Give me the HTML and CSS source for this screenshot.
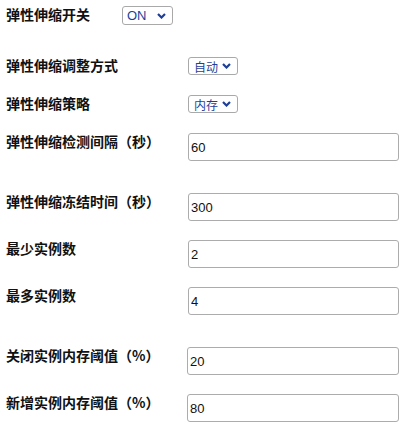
FILE: index.html
```html
<!DOCTYPE html>
<html lang="zh-CN">
<head>
<meta charset="utf-8">
<title>弹性伸缩设置</title>
<link rel="stylesheet" href="styles.css">
</head>
<body>
<form class="form">
  <div class="row row-switch">
    <label class="label label-short">弹性伸缩开关</label>
    <div class="select select-on"><span>ON</span><svg class="chev" width="9" height="6" viewBox="0 0 9 6"><path d="M1 1 L4.5 4.5 L8 1" fill="none" stroke="#1d3f99" stroke-width="2.2"/></svg></div>
  </div>
  <div class="row row-sel group">
    <label class="label">弹性伸缩调整方式</label>
    <div class="select select-cn"><span>自动</span><svg class="chev" width="9" height="6" viewBox="0 0 9 6"><path d="M1 1 L4.5 4.5 L8 1" fill="none" stroke="#1d3f99" stroke-width="2.2"/></svg></div>
  </div>
  <div class="row row-sel">
    <label class="label">弹性伸缩策略</label>
    <div class="select select-cn"><span>内存</span><svg class="chev" width="9" height="6" viewBox="0 0 9 6"><path d="M1 1 L4.5 4.5 L8 1" fill="none" stroke="#1d3f99" stroke-width="2.2"/></svg></div>
  </div>
  <div class="row">
    <label class="label">弹性伸缩检测间隔（秒）</label>
    <input class="input" type="text" value="60">
  </div>
  <div class="row group">
    <label class="label">弹性伸缩冻结时间（秒）</label>
    <input class="input" type="text" value="300">
  </div>
  <div class="row">
    <label class="label">最少实例数</label>
    <input class="input" type="text" value="2">
  </div>
  <div class="row">
    <label class="label">最多实例数</label>
    <input class="input" type="text" value="4">
  </div>
  <div class="row group">
    <label class="label">关闭实例内存阈值（%）</label>
    <input class="input input-wide" type="text" value="20">
  </div>
  <div class="row">
    <label class="label">新增实例内存阈值（%）</label>
    <input class="input input-wide" type="text" value="80">
  </div>
</form>
</body>
</html>
```

FILE: styles.css
```css
html, body {
  margin: 0;
  padding: 0;
  background: #ffffff;
}

.form {
  display: flex;
  flex-direction: column;
  gap: 19px;
  padding: 6px 0 0 6px;
  margin: 0;
}

.row {
  display: flex;
  align-items: flex-start;
}

.row.group {
  margin-top: 13px;
}

.row-sel {
  min-height: 19px;
}

.label {
  width: 182px;
  flex: none;
  font-family: "Noto Sans CJK SC", "Noto Sans", sans-serif;
  font-weight: 700;
  font-size: 14px;
  line-height: 16px;
  color: #111111;
  text-spacing-trim: space-all;
  white-space: nowrap;
}

.label-short {
  width: 116px;
}

.select {
  box-sizing: border-box;
  display: flex;
  align-items: center;
  justify-content: space-between;
  height: 18px;
  border: 1px solid #a9a9a9;
  border-radius: 3px;
  background: #ffffff;
  color: #1d3f99;
  padding: 0 6px 0 5px;
}

.select-on {
  width: 51px;
  height: 19px;
  font-family: "Liberation Sans", Arial, sans-serif;
  font-size: 13px;
  padding-left: 4px;
}

.select-cn {
  width: 50px;
  font-family: "Noto Sans CJK SC", sans-serif;
  font-size: 12px;
}

.chev {
  display: block;
  flex: none;
}

.input {
  box-sizing: border-box;
  width: 211px;
  height: 28px;
  margin: 0;
  border: 1px solid #acacac;
  border-radius: 3px;
  padding: 0 2px 0 2px;
  font-family: "Liberation Sans", Arial, sans-serif;
  font-size: 13px;
  color: #111111;
  background: #ffffff;
  outline: none;
}

.input-wide {
  width: 212px;
  margin-left: -1px;
}
```
